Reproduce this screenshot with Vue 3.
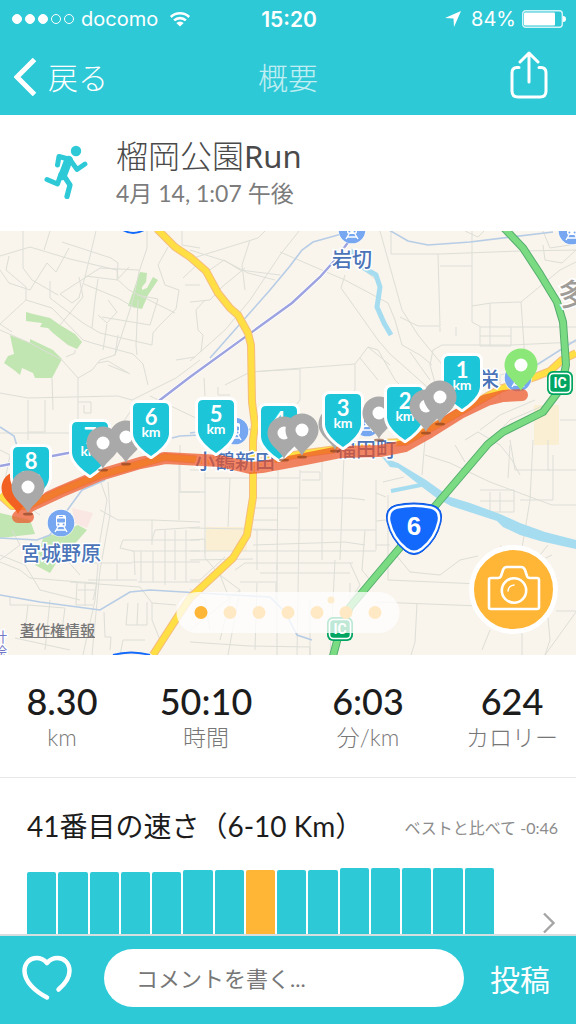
<template>
  <div class="page">
    <header class="top">
      <div class="status">
        <div class="carrier">
          <span class="signal">
            <i v-for="n in 5" :key="n" :class="{ on: n <= 3 }"></i>
          </span>
          <span>docomo</span>
          <svg class="wifi" viewBox="0 0 24 18">
            <path d="M2 6.500A14.500 14.500 0 0 1 22 6.500M5.600 10.300A9.300 9.300 0 0 1 18.400 10.300" fill="none" stroke="#fff" stroke-width="2.800" />
            <path d="M12 17L8 13A5.600 5.600 0 0 1 16 13Z" fill="#fff" />
          </svg>
        </div>
        <strong class="clock">15:20</strong>
        <div class="power">
          <svg class="arrow" viewBox="0 0 16 16">
            <path d="M16 0L9 16L8.500 7.500L0 7Z" fill="#fff" />
          </svg>
          <span>84%</span>
          <svg class="battery" viewBox="0 0 44 18">
            <rect x="0.700" y="0.700" width="39.600" height="16.600" rx="3" fill="none" stroke="#fff" stroke-width="1.400" opacity="0.800" />
            <rect x="2" y="2.500" width="31" height="13" rx="1" fill="#fff" />
            <path d="M41 6Q44 6 44 9T41 12Z" fill="#fff" />
          </svg>
        </div>
      </div>
      <nav class="nav">
        <button class="back" type="button">
          <svg viewBox="0 0 24 38">
            <path d="M20.500 1.500L3 19L20.500 36.500" fill="none" stroke="#fff" stroke-width="5" />
          </svg>
          戻る
        </button>
        <h1>概要</h1>
        <button class="share" type="button" aria-label="共有">
          <svg viewBox="0 0 38 48">
            <path d="M9 16.500H7Q2 16.500 2 22V40Q2 46 8 46H30Q36 46 36 40V22Q36 16.500 31 16.500H29M19 31V2M10 11L19 2L28 11" fill="none" stroke="#fff" stroke-width="3" stroke-linecap="round" stroke-linejoin="round" />
          </svg>
        </button>
      </nav>
    </header>

    <section class="activity">
      <svg class="runner" viewBox="0 0 44 54">
        <circle cx="32" cy="6" r="5.200" fill="#2dc9d7" />
        <g fill="none" stroke="#2dc9d7" stroke-linecap="round" stroke-linejoin="round">
          <path d="M24.500 15L18.500 31" stroke-width="8.500" />
          <path d="M26 14.500L15 11.500L13.500 20" stroke-width="5" />
          <path d="M27 16L33 24.500L41 19" stroke-width="4.800" />
          <path d="M17 29L13.500 39L3 34.500" stroke-width="5" />
          <path d="M20 31L26 40L23 51.500" stroke-width="5.200" />
        </g>
      </svg>
      <div>
        <h2>榴岡公園<span>Run</span></h2>
        <p>4月 14, 1:07 午後</p>
      </div>
    </section>

    <section class="map">
      <svg class="canvas" viewBox="0 231 576 424" role="img" aria-label="ルート">
        <rect y="231" width="576" height="424" fill="#f9f4ec" />
        <path v-for="d in parks" :key="d" :d="d" fill="#c1e6b1" />
        <path d="M72 508L93 513L87 528L75 523Z" fill="#fae6e2" />
        <path d="M206 527H247V551H206ZM534 405H559V445H534Z" fill="#faeed3" />

        <g class="streets">
          <path v-for="d in streets" :key="d" :d="d" />
        </g>
        <g class="streams">
          <path v-for="d in streams" :key="d" :d="d" />
        </g>

        <g fill="none" stroke="#a6dcf0" stroke-linejoin="round">
          <path d="M350 250L364 268L376 275L380 287L377 307L384 323L391 335" stroke-width="5" />
          <path d="M391 491L426 484" stroke-width="4" />
        </g>
        <path d="M382 457L398 463L426 480L450 497L470 503L500 514L520 523L545 532L576 540V549L540 541L520 535L503 527L497 521L451 506L438 499L422 487L398 468L390 467Z" fill="#a6dcf0" />

        <path class="rail-edge" :d="rail" />
        <path class="rail" :d="rail" />

        <g v-for="d in highways" :key="d" class="highway">
          <path class="edge" :d="d" />
          <path :d="d" />
        </g>
        <g class="express">
          <path class="edge" :d="express" />
          <path :d="express" />
        </g>

        <g v-for="s in stations" :key="s.x" :transform="`translate(${s.x} ${s.y})`">
          <circle r="14" fill="#fff" opacity="0.700" />
          <circle r="13.300" fill="#76a7f0" />
          <rect x="-5" y="-8" width="10" height="12" rx="2" fill="#fff" />
          <path d="M-3.500 -4H3.500V-1H-3.500ZM-2 -6.500H2" fill="#76a7f0" stroke="#76a7f0" />
          <circle cx="-2.600" cy="1.500" r="1" fill="#76a7f0" />
          <circle cx="2.600" cy="1.500" r="1" fill="#76a7f0" />
          <path d="M-3 4L-6 9M3 4L6 9M-5 7H5" stroke="#fff" stroke-width="1.400" />
        </g>

        <g class="places">
          <text v-for="p in places" :key="p.name" :x="p.x" :y="p.y">{{ p.name }}</text>
          <text class="city" x="558" y="305">多</text>
          <text class="faint" x="7" y="642">計</text>
          <text class="faint" x="7" y="657">絵</text>
        </g>

        <path class="route" :d="route" />

        <g v-for="c in interchanges" :key="c.x" :transform="`translate(${c.x} ${c.y})`">
          <rect x="-13" y="-12" width="26" height="24" rx="6" fill="#00a562" />
          <rect x="-10.500" y="-9.500" width="21" height="19" rx="4" fill="none" stroke="#fff" stroke-width="1.600" />
          <text class="ic" y="5">IC</text>
        </g>

        <g transform="translate(414 528)">
          <path d="M-18 -23Q0 -27 18 -23Q30 -20 27 -6Q23 12 9 23Q0 30 -9 23Q-23 12 -27 -6Q-30 -20 -18 -23Z" fill="#1269fb" stroke="#0b55e0" />
          <path d="M-17 -20.500Q0 -24 17 -20.500Q27 -18 24.500 -6Q21 10 8 20.500Q0 27 -8 20.500Q-21 10 -24.500 -6Q-27 -18 -17 -20.500Z" fill="none" stroke="#fff" stroke-width="2.400" />
          <text class="shield" y="7">6</text>
        </g>
        <path d="M123 230Q133 236 144 230M113 655Q131 650 150 655" fill="none" stroke="#1269fb" stroke-width="2" />
        <circle cx="331" cy="600" r="3.500" fill="#f5b63c" />

        <template v-for="m in markers" :key="m.x">
          <g v-if="m.km" class="km" :transform="`translate(${m.x} ${m.y})`">
            <path d="M0 0C-6 -4 -18 -13 -18 -23V-48Q-18 -53 -13 -53H13Q18 -53 18 -48V-23C18 -13 6 -4 0 0Z" />
            <text y="-31" class="num">{{ m.km }}</text>
            <text y="-19">km</text>
          </g>
          <g v-else :transform="`translate(${m.x} ${m.y})`">
            <ellipse v-if="!m.color" cy="27" rx="5" ry="1.500" fill="#7b3c1c" opacity="0.600" />
            <path d="M0 26C-4 17 -16.500 12 -16.500 0A16.500 16.500 0 0 1 16.500 0C16.500 12 4 17 0 26Z" :fill="m.color || '#a9a9a9'" />
            <circle v-if="m.color !== '#f26022'" r="6.500" fill="#fff" />
          </g>
        </template>
      </svg>

      <a class="legal" href="#">著作権情報</a>
      <div class="dots">
        <button v-for="n in 7" :key="n" type="button" :class="{ active: n === page }" :aria-label="`${n}`" @click="page = n"></button>
      </div>
      <button class="camera" type="button" aria-label="カメラ">
        <svg viewBox="0 0 54 46">
          <g fill="none" stroke="#fff" stroke-width="2.600" stroke-linejoin="round">
            <path d="M4 13H11Q13.500 13 14 11L16 5Q17 2 20 2H34Q37 2 38 5L40 11Q40.500 13 43 13H50Q52 13 52 15V42Q52 44 50 44H4Q2 44 2 42V15Q2 13 4 13Z" />
            <circle cx="27" cy="25.500" r="12.200" />
            <path d="M21 26A6.500 6.500 0 0 1 27 20" stroke-width="1.600" stroke-linecap="round" />
          </g>
        </svg>
      </button>
    </section>

    <section class="stats">
      <div v-for="s in stats" :key="s.label">
        <strong>{{ s.value }}</strong>
        <span>{{ s.label }}</span>
      </div>
    </section>

    <section class="rank">
      <div class="rank-head">
        <h3>41番目の速さ（6-10 Km）</h3>
        <span>ベストと比べて -0:46</span>
      </div>
      <div class="rank-body">
        <div class="chart">
          <i v-for="(h, i) in bars" :key="i" :class="{ current: i === 7 }" :style="{ height: `${h}px` }"></i>
        </div>
        <button class="more" type="button" aria-label="次へ">
          <svg viewBox="0 0 14 22">
            <path d="M2 1.500L11.500 11L2 20.500" fill="none" stroke="#a5a5a5" stroke-width="2.400" />
          </svg>
        </button>
      </div>
    </section>

    <footer class="comment">
      <button class="like" type="button" aria-label="いいね">
        <svg viewBox="0 0 50 46">
          <path d="M25 42.500C14 37 2.500 27 2.500 16C2.500 8 8 3 14.500 3C19 3 22 4.500 25 8C28 4.500 31 3 35.500 3C42 3 47.500 8 47.500 16C47.500 23 43 29 36.500 34.500" fill="none" stroke="#fff" stroke-width="4.500" stroke-linecap="round" stroke-linejoin="round" />
        </svg>
      </button>
      <input type="text" placeholder="コメントを書く..." aria-label="コメント" />
      <button class="send" type="button">投稿</button>
    </footer>
  </div>
</template>

<script setup>
import { ref } from 'vue'

const page = ref(1)

const stats = [
  { value: '8.30', label: 'km' },
  { value: '50:10', label: '時間' },
  { value: '6:03', label: '分/km' },
  { value: '624', label: 'カロリー' },
]

const bars = [62, 62, 62, 62, 62, 64, 64, 64, 64, 64, 66, 66, 66, 66, 66]

const parks = [
  'M140 272L147 273L146 282L142 287V290L147 288L153 277L158 280L148 295L142 309L128 306Z',
  'M26 312L33 314L50 318L60 325L75 334L82 342L77 349L68 345L53 333L48 328L40 327L42 323L26 321Z',
  'M10 335L30 343V339L53 350L62 359L52 378L35 378L33 373L22 368L20 375L14 370L4 363L8 356L14 354Z',
  'M0 513L30 520L35 534L0 538Z',
  'M78 525L87 530L72 547L60 557L50 573L35 565L43 538Z',
]

// minor roads
const streets = [
  'M0 256L30 247L70 259L117 270L118 278', 'M23 231V268L32 280L58 295', 'M50 231L44 250', 'M96 231L85 277L79 297', 'M62 242L111 258L118 263L117 280L129 267',
  'M147 231V248L139 272L133 300L124 328L115 355', 'M69 248L56 272L47 263L30 290L9 283L0 270', 'M9 256L6 270L26 287V300L0 324L12 332', 'M50 281V298L83 323L100 333L152 345L153 333L158 327L176 309L179 290L165 285L158 265L168 247',
  'M80 297L72 303L60 294L100 268L139 270', 'M85 276L118 280L129 290L175 313', 'M60 325L83 297L79 277M98 279L95 300L92 328M108 300L117 312L107 323L98 315M84 284L118 298L135 308M137 295L158 299L150 325L102 317',
  'M26 300L52 308L83 340L92 343L133 354L143 364L148 385M107 324L103 350M138 300L136 345L137 355', 'M0 330L30 343L62 360L78 378V430M78 378L92 370L100 360L115 355L118 335', 'M75 350V353L66 357M98 363L108 361L130 374M108 365L128 373',
  'M0 393L28 398L72 397L118 396L132 400L176 378L200 360', 'M28 400V440M45 400V432H28M0 433H80M52 378L53 410M78 402H91V413H84V405M118 430L138 400M176 360L195 357M150 396L200 420', 'M182 231V245L200 248M183 278L200 262M185 285H200',
  'M190 250L225 261L248 273L275 280M190 259L258 238L265 231M299 231L280 255L250 300L225 330L190 361', 'M280 252L345 280L388 303L395 320L402 345L420 355L432 365', 'M245 290L242 265L250 240M207 272L224 260L240 270L280 275', 'M190 302L210 300L222 287L245 268M205 300L196 310L198 330L203 335L201 352',
  'M345 275L341 288L378 340L390 354L425 385L440 402', 'M362 268L376 280M380 231L402 310L418 335L440 362L466 392', 'M225 385L250 372L355 364V390L345 400', 'M250 372L300 369V400L292 410M218 387V395H230M205 396L204 378',
  'M355 364L368 347L378 350L395 380L410 395M368 347L390 365M360 358L378 380M410 352L430 380', 'M391 231V254H440L520 251L576 250M438 254L440 326H418L400 317', 'M472 231V322L481 327H576M440 266H472M472 306L491 303L521 302L525 360M490 303V345M480 327V346H511V327M480 336H511M440 327V332M456 327V336',
  'M440 401L430 365L433 350L442 345L511 345L576 342M521 302L560 270L576 262M543 245L545 260L562 263L576 250', 'M543 231L550 248L570 245M465 231L478 237L484 231', 'M480 430L500 415L535 400M490 440L510 420L545 405M465 440L478 432L500 445L512 460L520 475',
  'M500 400V375L512 372M560 420H576M548 440V470H576M533 440L530 500L520 560L500 600M510 440L515 470H550M553 455V500H520', 'M425 440L422 475M425 455L450 463L490 482L552 505H576M490 440L465 470M510 445L508 478',
  'M455 445L465 462M480 490H514V512H490V492M500 492V512M480 501H514',
  'M383 482L404 477M376 493L386 497M388 495V580L480 584', 'M376 521L386 520M376 545H390M396 555L410 572L440 575L460 560L478 556', 'M376 602L480 606M417 603L415 642L411 655M548 545L540 555M535 563L552 555M500 546L508 549',
  'M490 630L482 650M522 620V655M548 618L550 640L545 655M576 612L545 655M556 611H576', 'M180 445V493M180 492H205M205 470V553M190 470H205M230 478L228 527M205 478H250', 'M278 470L277 570M300 470L297 655M322 460V560M253 498H350L365 500M344 455L340 560M253 508H298M253 478H300M300 472H320V480H302M376 480V550',
  'M190 528L300 530L376 530M253 520H277M257 530V570M253 530H278M253 545L345 542L365 545M190 551H376', 'M190 560L253 559M190 540L205 539V558L220 575L240 590M190 580H200L225 557M235 570L245 563H353M240 582H277M277 563V655M260 573H350M276 583V600',
  'M350 563L360 585L350 600M335 560L333 600L330 655M365 530L362 570L370 580M190 630L215 610L240 590L228 655M190 642L250 646L310 647V655', 'M190 589L205 600L210 630M310 600V655M257 583L255 650', 'M220 575L230 600L220 640M350 583V610L335 620',
  'M100 480L107 500L100 540L95 600L83 655M108 482L110 515L100 570L92 655M100 510L118 520L152 520L200 522', 'M179 465V520M180 492H200M120 548L123 540H152L155 530L200 527', 'M152 520V545M165 530V585M175 530V580M186 530V582M132 551H200M134 551L135 575M141 551V582M153 551V582M152 540H200M132 562H200M138 582H200M120 548L133 551',
  'M90 563H132M88 580H137M117 563V580M77 583L76 605H93M85 583V606M78 590H95M93 600L97 583M70 582L140 587L152 603L176 605', 'M0 562L20 570L30 578L80 582L97 583M0 555L25 565L40 590L80 600M60 552L80 575M64 545L95 563',
  'M10 596V605H28L25 630L23 638M50 600L45 650M28 605L65 608L62 630M104 612L105 637H111L110 650M128 603L126 625H147V602M138 603L137 625M152 603V620L160 640M15 638L70 650M120 655L123 640L145 640',
  'M0 450L10 455L5 480M12 530L20 545L0 560M25 505L40 515',
]

const streams = [
  'M345 233L313 242L302 250L290 266L270 290L210 358', 'M389 230L408 241L428 245L470 242L553 232', 'M0 595L40 602L100 610L130 592L150 590L200 593L270 597L285 612L297 635L312 640',
  'M0 538L37 540L50 535L66 512L82 490L105 480', 'M172 438L180 436L200 435', 'M0 427L14 436L17 446', 'M535 366L576 340', 'M190 433L198 432M240 430L256 429',
]

const rail = 'M352 237L335 260L320 277L292 303L190 377L160 400L130 430L100 446L68 453L0 466'

const highways = [
  'M157 229L175 247L190 257L206 271L218 293L230 308L238 315L248 333L251 345L252 402L255 425L253 440L253 497L247 535L233 558L190 598L180 613L153 655',
  'M0 495L12 506L28 506L60 491L100 475L165 457L250 464L300 454L380 443L405 442L440 423L500 389L535 377L550 371L562 360L576 353',
]

const express = 'M504 228L523 248L540 274L557 302L563 322L566 365L561 388L543 412L503 432L488 444L436 505L376 576L350 607L340 630L333 656'

const route = 'M522 395L503 396L487 400L462 412L430 432L405 446L380 451L340 452L305 459L262 467L250 468L220 461L165 458L140 463L100 475L60 492L30 506L18 517L28 517'

const stations = [
  { x: 352, y: 230 },
  { x: 572, y: 231 },
  { x: 235, y: 431 },
  { x: 367, y: 423 },
  { x: 518, y: 378 },
  { x: 61, y: 523 },
]

const places = [
  { name: '岩切', x: 352, y: 267 },
  { name: '宮城野原', x: 61, y: 561 },
  { name: '小鶴新田', x: 235, y: 469 },
  { name: '福田町', x: 366, y: 457 },
  { name: '栄', x: 489, y: 387 },
]

const interchanges = [
  { x: 560, y: 383 },
  { x: 340, y: 629 },
]

// listed back to front
const markers = [
  { km: 7, x: 90, y: 475 },
  { x: 126, y: 437 },
  { x: 103, y: 443 },
  { km: 6, x: 151, y: 456 },
  { km: 5, x: 216, y: 453 },
  { km: 4, x: 279, y: 459 },
  { x: 284, y: 433 },
  { x: 302, y: 430 },
  { x: 335, y: 424 },
  { km: 3, x: 343, y: 447 },
  { x: 379, y: 413 },
  { km: 2, x: 405, y: 440 },
  { km: 1, x: 462, y: 409 },
  { x: 426, y: 406 },
  { x: 440, y: 397 },
  { color: '#8be878', x: 521, y: 365 },
  { color: '#f26022', x: 18, y: 488 },
  { km: 8, x: 31, y: 500 },
  { x: 28, y: 487 },
]
</script>

<style>
body {
  margin: 0;
  background: #fff;
}
</style>

<style scoped>
.page {
  display: flex;
  flex-direction: column;
  min-height: 100vh;
  color: #1c1c1c;
  font-family: Lato, "Noto Sans CJK JP", sans-serif;
}

h1, h2, h3, p {
  margin: 0;
  font-weight: 300;
}

button {
  padding: 0;
  border: 0;
  background: none;
  color: inherit;
  font: inherit;
  cursor: pointer;
}

svg {
  display: block;
}

.top {
  background: #2dc9d7;
  color: #fff;
}

.status {
  display: grid;
  grid-template-columns: 1fr auto 1fr;
  align-items: center;
  height: 38px;
  padding: 0 10px 0 12px;
  font-family: Inter, sans-serif;
  font-size: 20px;
}

.carrier, .power, .signal {
  display: flex;
  align-items: center;
}

.carrier {
  gap: 7px;
}

.signal {
  gap: 3px;
}

.signal i {
  box-sizing: border-box;
  width: 10px;
  height: 10px;
  border: 1px solid #fff;
  border-radius: 50%;
}

.signal .on {
  background: #fff;
}

.wifi {
  width: 22px;
  margin-left: 4px;
}

.clock {
  font-size: 21px;
  font-weight: 600;
}

.power {
  justify-content: flex-end;
  gap: 6px;
}

.arrow {
  width: 16px;
  margin-right: 4px;
}

.battery {
  width: 44px;
}

.nav {
  display: grid;
  grid-template-columns: 1fr auto 1fr;
  align-items: center;
  height: 77px;
  padding: 0 14px;
  font-size: 30px;
  font-weight: 300;
  line-height: 40px;
}

.back {
  display: flex;
  align-items: center;
  gap: 10px;
  justify-self: start;
}

.back svg {
  width: 24px;
}

.nav h1 {
  font-size: 30px;
  opacity: 0.7;
}

.share {
  justify-self: end;
  margin: 0 14px 4px 0;
}

.share svg {
  width: 38px;
}

.activity {
  display: flex;
  align-items: center;
  gap: 28px;
  box-sizing: border-box;
  height: 116px;
  padding: 0 44px 2px;
}

.runner {
  width: 44px;
}

.activity h2 {
  color: #4a4a4a;
  font-size: 32px;
  line-height: 42px;
}

.activity h2 span {
  font-family: "Noto Sans", sans-serif;
  font-size: 31px;
  font-weight: 400;
}

.activity p {
  color: #7c7c7c;
  font-size: 23px;
  font-weight: 400;
  line-height: 32px;
}

.map {
  position: relative;
  overflow: hidden;
}

.canvas {
  width: 100%;
}

.streets path {
  fill: none;
  stroke: #dddfd7;
  stroke-width: 1;
}

.streams path {
  fill: none;
  stroke: #b7cde6;
  stroke-width: 1.6;
}

.rail-edge {
  fill: none;
  stroke: #fff;
  stroke-width: 4;
}

.rail {
  fill: none;
  stroke: #9ca3e0;
  stroke-width: 2.4;
}

.highway path {
  fill: none;
  stroke: #ffdf43;
  stroke-width: 6;
  stroke-linejoin: round;
}

.highway .edge {
  stroke: #f5bd7b;
  stroke-width: 8;
}

.express path {
  fill: none;
  stroke: #7bdb82;
  stroke-width: 6;
  stroke-linejoin: round;
}

.express .edge {
  stroke: #54ae6d;
  stroke-width: 8;
}

.route {
  fill: none;
  stroke: #ed5124;
  stroke-width: 12;
  stroke-linecap: round;
  stroke-linejoin: round;
  opacity: 0.7;
}

.places text {
  fill: #4b74b8;
  stroke: #fff;
  stroke-width: 3px;
  paint-order: stroke;
  font-family: "Noto Sans CJK JP", sans-serif;
  font-size: 20px;
  font-weight: 500;
  text-anchor: middle;
}

.places .city {
  fill: #a09d99;
  font-size: 30px;
  text-anchor: start;
}

.places .faint {
  fill: #7478c4;
  font-size: 14px;
  font-weight: 400;
  text-anchor: end;
}

.ic {
  fill: #fff;
  font-family: Roboto, sans-serif;
  font-size: 14px;
  font-weight: 700;
  text-anchor: middle;
}

.shield {
  fill: #fff;
  font-family: "Liberation Sans", sans-serif;
  font-size: 26px;
  font-weight: 700;
  text-anchor: middle;
}

.km path {
  fill: #1cc6d8;
  stroke: #fff;
  stroke-width: 6px;
  stroke-linejoin: round;
  paint-order: stroke;
}

.km text {
  fill: #fff;
  font-size: 14px;
  font-weight: 700;
  text-anchor: middle;
}

.km .num {
  font-size: 22px;
}

.legal {
  position: absolute;
  bottom: 15px;
  left: 20px;
  color: #777;
  font-size: 15px;
  font-weight: 500;
}

.dots {
  position: absolute;
  bottom: 22px;
  left: 50%;
  display: flex;
  gap: 16px;
  padding: 14px 18px;
  border-radius: 21px;
  background: rgba(255, 255, 255, 0.75);
  transform: translateX(-50%);
}

.dots button {
  width: 13px;
  height: 13px;
  border-radius: 50%;
  background: #ffe8c4;
}

.dots .active {
  background: #ffb535;
}

.camera {
  position: absolute;
  right: 18px;
  bottom: 21px;
  display: grid;
  place-items: center;
  width: 89px;
  height: 89px;
  border: 5px solid #fff;
  border-radius: 50%;
  background: #ffb535;
}

.camera svg {
  width: 54px;
  margin-bottom: 4px;
}

.stats {
  display: grid;
  grid-template-columns: 31fr 41fr 40fr 32fr;
  padding: 24px 0 26px;
  border-bottom: 1px solid #e8e8e8;
  text-align: center;
}

.stats strong, .stats span {
  display: block;
}

.stats strong {
  font-size: 36px;
  font-weight: 500;
  line-height: 44px;
}

.stats span {
  color: #777;
  font-size: 23px;
  font-weight: 300;
  line-height: 28px;
}

.rank {
  flex: 1;
  padding-left: 27px;
}

.rank-head {
  display: flex;
  align-items: center;
  justify-content: space-between;
  height: 90px;
  padding: 4px 18px 0 0;
  box-sizing: border-box;
  white-space: nowrap;
}

.rank-head h3 {
  font-size: 28px;
  font-weight: 400;
}

.rank-head span {
  padding-top: 4px;
  color: #8c8c8c;
  font-size: 16px;
}

.rank-body {
  display: flex;
  align-items: flex-end;
  justify-content: space-between;
  gap: 48px;
  padding-right: 20px;
}

.chart {
  display: flex;
  flex: 1;
  align-items: flex-end;
  gap: 2px;
  height: 66px;
}

.chart i {
  flex: 1;
  border-radius: 2px 2px 0 0;
  background: #2dc9d7;
}

.chart .current {
  background: #ffb535;
}

.more svg {
  width: 14px;
}

.comment {
  position: sticky;
  bottom: 0;
  display: flex;
  align-items: center;
  box-sizing: border-box;
  height: 90px;
  padding: 0 26px 4px 22px;
  border-top: 2px solid #d5dfe0;
  background: #2dc9d7;
  color: #fff;
}

.like svg {
  width: 50px;
}

.comment input {
  flex: 1;
  box-sizing: border-box;
  min-width: 0;
  height: 58px;
  margin: 0 26px 0 32px;
  padding: 0 32px;
  border: 0;
  border-radius: 29px;
  background: #fff;
  color: #333;
  font: inherit;
  font-size: 22px;
}

.comment input::placeholder {
  color: #777;
}

.send {
  font-size: 30px;
}
</style>
